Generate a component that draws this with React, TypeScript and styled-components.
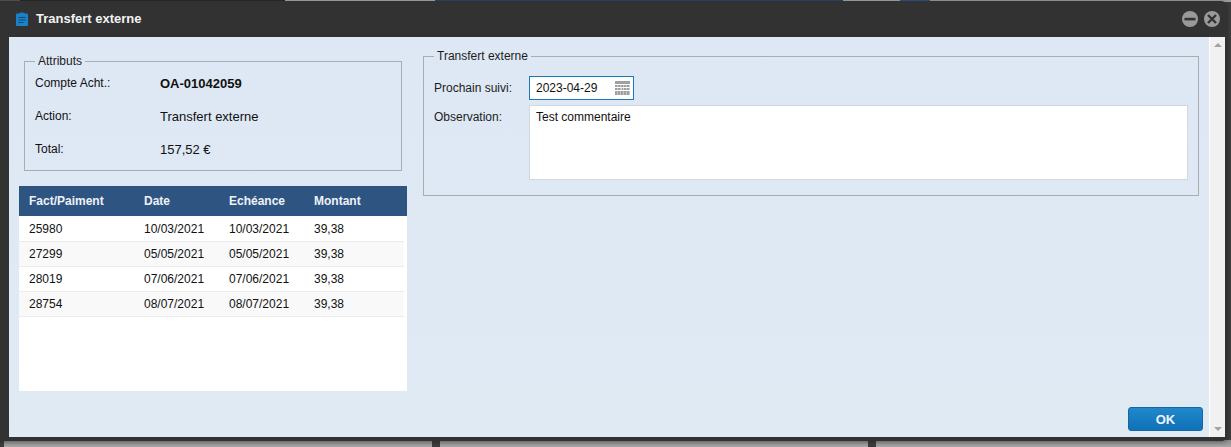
import React from "react";
import styled, { createGlobalStyle } from "styled-components";

const Global = createGlobalStyle`
  html, body { margin: 0; padding: 0; width: 1231px; height: 447px; overflow: hidden; background: #8f8f8f; }
  * { box-sizing: border-box; }
  body { font-family: "Liberation Sans", Arial, sans-serif; font-size: 12px; color: #111; }
`;

const Page = styled.div`
  position: relative;
  width: 1231px;
  height: 447px;
  overflow: hidden;
  background: #3c3c3c;
`;

const TopStrip = styled.div`
  display: flex;
  height: 2px;
  background: #9a9a9a;
`;

const StripPart = styled.div<{ $w: number; $c: string }>`
  width: ${(p) => p.$w}px;
  background: ${(p) => p.$c};
`;

const BottomStrip = styled.div`
  position: absolute;
  left: 4px;
  right: 0;
  bottom: 0;
  height: 7px;
  display: flex;
  gap: 8px;
`;

const BottomPart = styled.div<{ $w?: number }>`
  ${(p) => (p.$w ? `width: ${p.$w}px;` : "flex: 1;")}
  background: linear-gradient(#8a8a8a, #a6a6a6);
`;

const Modal = styled.div`
  position: absolute;
  left: -4px;
  top: 1px;
  width: 1231px;
  height: 440px;
  background: #323232;
  border-radius: 4px 6px 5px 4px;
  display: flex;
  flex-direction: column;
  box-shadow: 0 1px 4px rgba(0, 0, 0, 0.35);
`;

const TitleBar = styled.div`
  height: 36px;
  flex: none;
  display: flex;
  align-items: center;
  padding: 0 7px 0 20px;
  color: #f2f2f2;
  font-weight: 700;
  font-size: 13px;
`;

const TitleText = styled.span`
  margin-left: 8px;
  flex: 1;
  position: relative;
  top: -1px;
`;

const WinButtons = styled.div`
  display: flex;
  gap: 6px;
`;

const Body = styled.div`
  flex: 1;
  display: flex;
  margin: 0 2px 4px 13px;
  min-height: 0;
`;

const Content = styled.div`
  width: 1200px;
  background: linear-gradient(#dee8f5, #e0eaf3);
  position: relative;
  display: grid;
  grid-template-columns: 404px 1fr;
`;

const LeftCol = styled.div`
  display: flex;
  flex-direction: column;
  padding: 17px 0 0 10px;
`;

const RightCol = styled.div`
  padding: 12px 10px 0 10px;
`;

const Fieldset = styled.fieldset`
  margin: 0;
  border: 1px solid #aaadb0;
  padding: 0;
  min-width: 0;
`;

const AttrSet = styled(Fieldset)`
  margin-left: 5px;
  margin-right: 11px;
  height: 117px;
  padding: 8px 0 0 10px;
`;

const Legend = styled.legend`
  padding: 0 3px;
  margin-left: 0;
  font-size: 12px;
  line-height: 14px;
  color: #1c1c1c;
`;

const AttrRow = styled.div`
  display: grid;
  grid-template-columns: 125px 1fr;
  height: 33px;
  align-items: start;
`;

const AttrLabel = styled.div`
  line-height: 14px;
`;

const AttrValue = styled.div<{ $bold?: boolean }>`
  font-size: 13px;
  line-height: 15px;
  font-weight: ${(p) => (p.$bold ? 700 : 400)};
`;

const TableWrap = styled.div`
  margin-top: 15px;
  width: 388px;
  height: 205px;
  background: #fff;
`;

const HeadRow = styled.div`
  height: 30px;
  display: grid;
  grid-template-columns: 115px 85px 85px 1fr;
  padding-left: 10px;
  align-items: center;
  background: #2e5482;
  color: #eef2f7;
  font-weight: 700;
`;

const Rows = styled.div`
  padding-top: 1px;
`;

const Row = styled.div<{ $alt?: boolean }>`
  height: 25px;
  width: 385px;
  display: grid;
  grid-template-columns: 115px 85px 85px 1fr;
  padding-left: 10px;
  align-items: center;
  background: ${(p) => (p.$alt ? "#f9f9f9" : "#fff")};
  border-bottom: 1px solid #ebebeb;
`;

const TransferSet = styled(Fieldset)`
  height: 147px;
  padding: 13px 10px 0 10px;
`;

const FormRow = styled.div`
  display: grid;
  grid-template-columns: 95px 1fr;
  margin-bottom: 5px;
`;

const FormLabel = styled.label<{ $top: number }>`
  padding-top: ${(p) => p.$top}px;
  line-height: 14px;
  color: #1c1c1c;
`;

const DateBox = styled.div`
  width: 105px;
  height: 24px;
  background: #fff;
  border: 1px solid #1b7ab8;
  display: flex;
  align-items: center;
  justify-content: space-between;
  padding: 0 3px 0 6px;
`;

const TextArea = styled.div`
  height: 75px;
  background: #fff;
  border: 1px solid #d4d8dc;
  padding: 4px 6px;
  line-height: 14px;
`;

const Footer = styled.div`
  position: absolute;
  right: 6px;
  bottom: 6px;
`;

const OkButton = styled.button`
  display: block;
  width: 75px;
  height: 24px;
  border: 1px solid #1467a5;
  border-radius: 3px;
  background: linear-gradient(#2287cb, #0f71b7);
  color: #eef6fc;
  font: 700 13px "Liberation Sans", Arial, sans-serif;
  padding: 0;
`;

const ScrollBar = styled.div`
  flex: 1;
  background: #f1f1f1;
  border-left: 1px solid #fff;
  display: flex;
  flex-direction: column;
  justify-content: space-between;
  align-items: center;
  padding: 6px 0 6px;
`;

const Arrow = styled.div<{ $up?: boolean }>`
  width: 0;
  height: 0;
  border-left: 4px solid transparent;
  border-right: 4px solid transparent;
  ${(p) => (p.$up ? "border-bottom: 4px solid #a3a3a3;" : "border-top: 4px solid #a3a3a3;")}
`;

const ClipboardIcon = () => (
  <svg width="12" height="14" viewBox="0 0 12 14">
    <path d="M1 1.500h2.500V.8h1.600a1 1 0 0 1 1.800 0h1.600v.7H11a1 1 0 0 1 1 1V13a1 1 0 0 1-1 1H1a1 1 0 0 1-1-1V2.500a1 1 0 0 1 1-1z" fill="#1a80c8" />
    <path d="M2.500 5.500h7M2.500 8h7M2.500 10.500h5" stroke="#14496f" strokeWidth="1" />
  </svg>
);

const MinIcon = () => (
  <svg width="16" height="16" viewBox="0 0 16 16">
    <circle cx="8" cy="8" r="8" fill="#9a9a9a" />
    <rect x="2.500" y="6.800" width="11" height="2.600" fill="#333" />
  </svg>
);

const CloseIcon = () => (
  <svg width="16" height="16" viewBox="0 0 16 16">
    <circle cx="8" cy="8" r="8" fill="#9a9a9a" />
    <path d="M4 4l8 8M12 4l-8 8" stroke="#333" strokeWidth="2.400" />
  </svg>
);

const CalendarIcon = () => (
  <svg width="15" height="14" viewBox="0 0 15 14" fill="#a0a0a0">
    <rect x="0" y="0" width="15" height="3" />
    {[4, 7, 10, 12].flatMap((y) =>
      [0, 3, 6, 9, 12].map((x) =>
        y === 7 && x === 6 ? null : <rect key={`${x}-${y}`} x={x} y={y} width="2.600" height="2" />
      )
    )}
    <path d="M6 8h3M7.500 6.800v2.400" stroke="#a0a0a0" strokeWidth="1" />
  </svg>
);

const rows = [
  ["25980", "10/03/2021", "10/03/2021", "39,38"],
  ["27299", "05/05/2021", "05/05/2021", "39,38"],
  ["28019", "07/06/2021", "07/06/2021", "39,38"],
  ["28754", "08/07/2021", "08/07/2021", "39,38"],
];

export default function App() {
  return (
    <Page>
      <Global />
      <TopStrip>
        <StripPart $w={20} $c="#555" />
        <StripPart $w={265} $c="#2a2a2a" />
        <StripPart $w={150} $c="#a5a5a5" />
        <StripPart $w={408} $c="#24476e" />
        <StripPart $w={57} $c="#a5a5a5" />
        <StripPart $w={30} $c="#2d5484" />
      </TopStrip>
      <BottomStrip>
        <BottomPart $w={428} />
        <BottomPart $w={428} />
        <BottomPart />
      </BottomStrip>
      <Modal>
        <TitleBar>
          <ClipboardIcon />
          <TitleText>Transfert externe</TitleText>
          <WinButtons>
            <MinIcon />
            <CloseIcon />
          </WinButtons>
        </TitleBar>
        <Body>
          <Content>
            <LeftCol>
              <AttrSet>
                <Legend>Attributs</Legend>
                <AttrRow>
                  <AttrLabel>Compte Acht.:</AttrLabel>
                  <AttrValue $bold>OA-01042059</AttrValue>
                </AttrRow>
                <AttrRow>
                  <AttrLabel>Action:</AttrLabel>
                  <AttrValue>Transfert externe</AttrValue>
                </AttrRow>
                <AttrRow>
                  <AttrLabel>Total:</AttrLabel>
                  <AttrValue>157,52 €</AttrValue>
                </AttrRow>
              </AttrSet>
              <TableWrap>
                <HeadRow>
                  <span>Fact/Paiment</span>
                  <span>Date</span>
                  <span>Echéance</span>
                  <span>Montant</span>
                </HeadRow>
                <Rows>
                  {rows.map((r, i) => (
                    <Row key={r[0]} $alt={i % 2 === 1}>
                      {r.map((c, j) => (
                        <span key={j}>{c}</span>
                      ))}
                    </Row>
                  ))}
                </Rows>
              </TableWrap>
            </LeftCol>
            <RightCol>
              <TransferSet>
                <Legend>Transfert externe</Legend>
                <FormRow>
                  <FormLabel $top={5}>Prochain suivi:</FormLabel>
                  <DateBox>
                    <span>2023-04-29</span>
                    <CalendarIcon />
                  </DateBox>
                </FormRow>
                <FormRow>
                  <FormLabel $top={5}>Observation:</FormLabel>
                  <TextArea>Test commentaire</TextArea>
                </FormRow>
              </TransferSet>
            </RightCol>
            <Footer>
              <OkButton>OK</OkButton>
            </Footer>
          </Content>
          <ScrollBar>
            <Arrow $up />
            <Arrow />
          </ScrollBar>
        </Body>
      </Modal>
    </Page>
  );
}
